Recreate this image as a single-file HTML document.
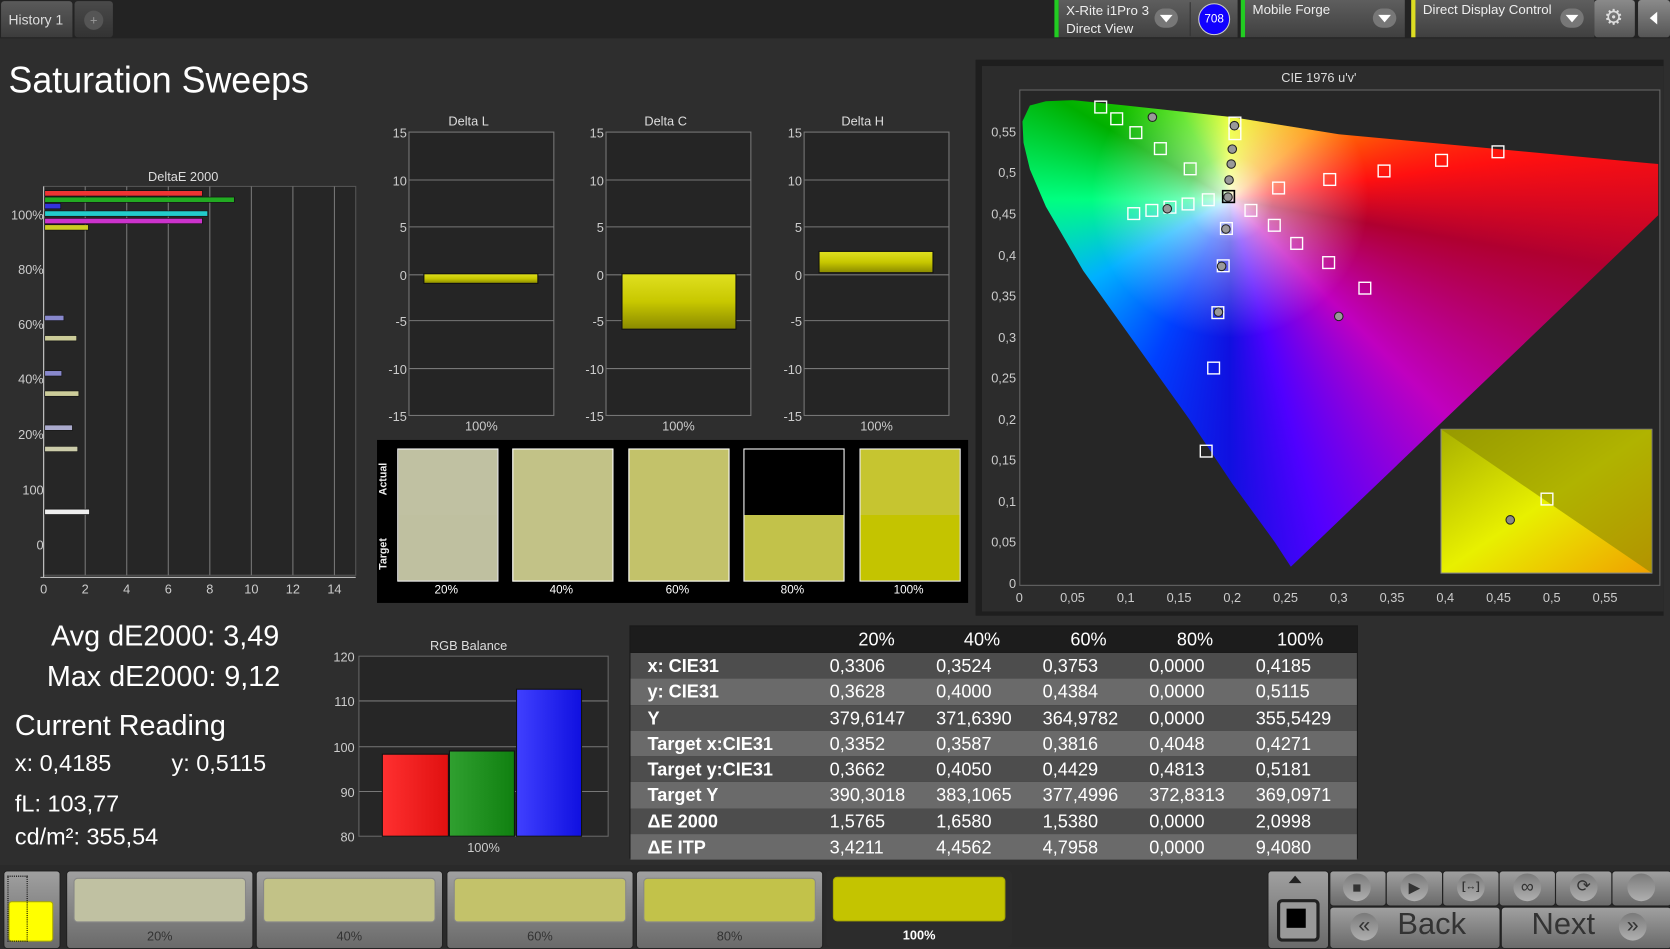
<!DOCTYPE html>
<html><head><meta charset="utf-8"><style>
html,body{margin:0;padding:0;background:#2d2d2d;overflow:hidden;width:1670px;height:947px}
#w{position:absolute;left:0;top:0;width:1568px;height:889px;transform:scale(1.06505,1.06524);transform-origin:0 0;background:#2e2e2e;font-family:"Liberation Sans",sans-serif;color:#fff}
.a{position:absolute}
.t{position:absolute;white-space:nowrap}
.btn{position:absolute;background:linear-gradient(#a0a0a0,#6a6a6a);border-radius:4px;border:1px solid #222}
.sw{position:absolute;border-radius:4px;border:1px solid #888}
.lbl{position:absolute;color:#333;font-size:12px;width:100%;text-align:center}
.ci{position:absolute;width:26px;height:26px;border-radius:13px;background:linear-gradient(#7a7a7a,#b0b0b0);color:#333;text-align:center;line-height:26px}
</style></head><body><div id="w">
<!-- top bar -->
<div class="a" style="left:0;top:0;width:1568px;height:36px;background:#232323"></div>
<div class="a" style="left:1px;top:1px;width:67px;height:34px;background:linear-gradient(#5a5a5a,#3c3c3c);border-radius:3px 3px 0 0"></div>
<div class="t" style="left:8px;top:11px;font-size:13px;color:#ddd">History 1</div>
<div class="a" style="left:70px;top:1px;width:36px;height:34px;background:linear-gradient(#4a4a4a,#333);border-radius:3px"></div>
<div class="a" style="left:79px;top:10px;width:18px;height:18px;border-radius:9px;background:#555;color:#999;font-size:12px;text-align:center;line-height:18px">+</div>
<div class="a" style="left:990px;top:0;width:168px;height:35px;background:linear-gradient(#5e5e5e,#404040);border-left:4px solid #2c2"></div>
<div class="t" style="left:1001px;top:2px;font-size:12.5px;color:#eee;line-height:17px">X-Rite i1Pro 3<br>Direct View</div>
<div class="a" style="left:1084px;top:8px;width:22px;height:18px;border-radius:11px;background:#777"></div>
<div class="a" style="left:1089px;top:14px;border:6px solid transparent;border-top:7px solid #fff;border-bottom:0"></div>
<div class="a" style="left:1117px;top:2px;width:1px;height:32px;background:#333"></div>
<div class="a" style="left:1125px;top:3px;width:28px;height:28px;border-radius:15px;background:#10f;border:1px solid #ccc;font-size:11px;text-align:center;line-height:28px">708</div>
<div class="a" style="left:1165px;top:0;width:150px;height:35px;background:linear-gradient(#5e5e5e,#404040);border-left:4px solid #2c2"></div>
<div class="t" style="left:1176px;top:2px;font-size:12.5px;color:#eee">Mobile Forge</div>
<div class="a" style="left:1289px;top:8px;width:22px;height:18px;border-radius:11px;background:#777"></div>
<div class="a" style="left:1294px;top:14px;border:6px solid transparent;border-top:7px solid #fff;border-bottom:0"></div>
<div class="a" style="left:1325px;top:0;width:168px;height:35px;background:linear-gradient(#5e5e5e,#404040);border-left:4px solid #dd2"></div>
<div class="t" style="left:1336px;top:2px;font-size:12.5px;color:#eee">Direct Display Control</div>
<div class="a" style="left:1465px;top:8px;width:22px;height:18px;border-radius:11px;background:#777"></div>
<div class="a" style="left:1470px;top:14px;border:6px solid transparent;border-top:7px solid #fff;border-bottom:0"></div>
<div class="a" style="left:1497px;top:0;width:38px;height:35px;background:linear-gradient(#8a8a8a,#555);border-radius:3px"></div>
<div class="t" style="left:1506px;top:4px;font-size:20px;color:#ddd">⚙</div>
<div class="a" style="left:1538px;top:0;width:30px;height:35px;background:linear-gradient(#8a8a8a,#555);border-radius:3px"></div>
<div class="a" style="left:1549px;top:11px;border:6px solid transparent;border-right:7px solid #fff;border-left:0"></div>

<div class="t" style="left:8px;top:56px;font-size:35px;color:#fff;transform:scaleX(.96);transform-origin:0 0">Saturation Sweeps</div>

<!-- DeltaE chart -->
<svg class="a" style="left:0;top:150px" width="345" height="415" font-family="Liberation Sans" font-size="12">
<text x="172" y="20" fill="#ddd" text-anchor="middle">DeltaE 2000</text>
<rect x="41" y="25" width="293" height="365" fill="#262626" stroke="#555"/>
<g stroke="#777" stroke-width="1">
<line x1="80" y1="25" x2="80" y2="390"/><line x1="119" y1="25" x2="119" y2="390"/><line x1="158" y1="25" x2="158" y2="390"/><line x1="197" y1="25" x2="197" y2="390"/><line x1="236" y1="25" x2="236" y2="390"/><line x1="275" y1="25" x2="275" y2="390"/><line x1="314" y1="25" x2="314" y2="390"/>
</g>
<line x1="41" y1="25" x2="41" y2="392" stroke="#ccc"/>
<line x1="38" y1="392" x2="334" y2="392" stroke="#ccc"/>
<g stroke="#111" stroke-width=".6">
<rect x="42" y="29" width="148" height="5" fill="#e33"/>
<rect x="42" y="35" width="178" height="5" fill="#2a2"/>
<rect x="42" y="41" width="15" height="5" fill="#33d"/>
<rect x="42" y="48" width="153" height="5" fill="#2cc"/>
<rect x="42" y="55" width="148" height="5" fill="#c3c"/>
<rect x="42" y="61" width="41" height="5" fill="#cc2"/>
<rect x="42" y="146" width="18" height="5" fill="#88c"/>
<rect x="42" y="165" width="30" height="5" fill="#cc9"/>
<rect x="42" y="198" width="16" height="5" fill="#88c"/>
<rect x="42" y="217" width="32" height="5" fill="#cc9"/>
<rect x="42" y="249" width="26" height="5" fill="#aac"/>
<rect x="42" y="269" width="31" height="5" fill="#cca"/>
<rect x="42" y="328" width="42" height="5" fill="#eee"/>
</g>
<g fill="#ccc" text-anchor="end">
<text x="41" y="56">100%</text><text x="41" y="107">80%</text><text x="41" y="159">60%</text><text x="41" y="210">40%</text><text x="41" y="262">20%</text><text x="41" y="314">100</text><text x="41" y="366">0</text>
</g>
<g fill="#ccc" text-anchor="middle">
<text x="41" y="407">0</text><text x="80" y="407">2</text><text x="119" y="407">4</text><text x="158" y="407">6</text><text x="197" y="407">8</text><text x="236" y="407">10</text><text x="275" y="407">12</text><text x="314" y="407">14</text>
</g>
</svg>

<!-- Delta L/C/H -->
<svg class="a" style="left:340px;top:100px" width="570" height="310" font-family="Liberation Sans" font-size="12">
<defs><linearGradient id="yb" x1="0" y1="0" x2="0" y2="1"><stop offset="0" stop-color="#e0e020"/><stop offset=".5" stop-color="#c8c800"/><stop offset="1" stop-color="#8a8a00"/></linearGradient></defs>
<g id="ch">
<rect x="44" y="24" width="136" height="266" fill="#252525" stroke="#777"/>
<g stroke="#777"><line x1="44" y1="69" x2="180" y2="69"/><line x1="44" y1="113" x2="180" y2="113"/><line x1="44" y1="158" x2="180" y2="158"/><line x1="44" y1="201" x2="180" y2="201"/><line x1="44" y1="246" x2="180" y2="246"/></g>
<g fill="#ccc" text-anchor="end"><text x="42" y="29">15</text><text x="42" y="74">10</text><text x="42" y="118">5</text><text x="42" y="163">0</text><text x="42" y="206">-5</text><text x="42" y="251">-10</text><text x="42" y="295">-15</text></g>
<text x="112" y="304" fill="#ccc" text-anchor="middle">100%</text>
</g>
<use href="#ch" x="185"/><use href="#ch" x="371"/>
<text x="100" y="18" fill="#ddd" text-anchor="middle">Delta L</text>
<text x="285" y="18" fill="#ddd" text-anchor="middle">Delta C</text>
<text x="470" y="18" fill="#ddd" text-anchor="middle">Delta H</text>
<rect x="58" y="157" width="107" height="9" fill="url(#yb)" stroke="#111"/>
<rect x="244" y="157" width="107" height="52" fill="url(#yb)" stroke="#111"/>
<rect x="429" y="136" width="107" height="20" fill="url(#yb)" stroke="#111"/>
</svg>

<!-- swatches -->
<div class="a" style="left:354px;top:413px;width:555px;height:153px;background:#000"></div>
<div class="t" style="left:355px;font-size:10px;color:#eee;transform:rotate(-90deg);transform-origin:0 0;top:465px;font-weight:bold">Actual</div>
<div class="t" style="left:355px;top:535px;font-size:10px;color:#eee;transform:rotate(-90deg);transform-origin:0 0;font-weight:bold">Target</div>
<div class="a" style="left:373px;top:421px;width:93px;height:123px;border:1px solid #fff;background:linear-gradient(#c0c1a2 50%,#bfc0a0 50%)"></div>
<div class="a" style="left:481px;top:421px;width:93px;height:123px;border:1px solid #fff;background:#c2c287"></div>
<div class="a" style="left:590px;top:421px;width:93px;height:123px;border:1px solid #fff;background:#c3c26a"></div>
<div class="a" style="left:698px;top:421px;width:93px;height:123px;border:1px solid #fff;background:linear-gradient(#000 50%,#c2c24a 50%)"></div>
<div class="a" style="left:807px;top:421px;width:93px;height:123px;border:1px solid #fff;background:linear-gradient(#c6c530 50%,#c4c400 50%)"></div>
<div class="t" style="left:408px;top:548px;font-size:11px;color:#fff">20%</div>
<div class="t" style="left:516px;top:548px;font-size:11px;color:#fff">40%</div>
<div class="t" style="left:625px;top:548px;font-size:11px;color:#fff">60%</div>
<div class="t" style="left:733px;top:548px;font-size:11px;color:#fff">80%</div>
<div class="t" style="left:839px;top:548px;font-size:11px;color:#fff">100%</div>

<!-- CIE -->
<div class="a" style="left:916px;top:56px;width:646px;height:522px;background:#1e1e1e"></div>
<div class="a" style="left:922px;top:62px;width:640px;height:512px;background:#2c2c2c"></div>
<div class="t" style="left:1203px;top:66px;font-size:12px;color:#ddd">CIE 1976 u'v'</div>
<div class="a" style="left:957px;top:84px;width:600px;height:464px;background:#262626;border:1px solid #666"></div>
<div class="a" style="left:957px;top:84px;width:601px;height:464px;clip-path:polygon(3px 30px,10px 15px,25px 11px,50px 10px,100px 15px,200px 26px,300px 42px,450px 56px,600px 70px,600px 118px,255px 448px,240px 425px,200px 370px,160px 310px,110px 240px,60px 170px,25px 110px,10px 75px,4px 50px);background:radial-gradient(circle at 198px 103px,rgba(255,255,255,.9) 0,rgba(255,255,255,.45) 40px,rgba(255,255,255,0) 130px),conic-gradient(from 0deg at 198px 103px,#e8ff00 0deg,#ff9000 50deg,#ff1010 82deg,#b00030 100deg,#c000c0 135deg,#5000ff 165deg,#1010e0 180deg,#0040ff 205deg,#00b0ff 240deg,#00ff80 270deg,#00b000 300deg,#40e000 330deg,#e8ff00 360deg)"></div>
<svg class="a" style="left:916px;top:56px" width="652" height="530" font-family="Liberation Sans" font-size="12">
<g fill="#ccc" text-anchor="end">
<text x="38" y="72">0,55</text><text x="38" y="110">0,5</text><text x="38" y="149">0,45</text><text x="38" y="188">0,4</text><text x="38" y="226">0,35</text><text x="38" y="265">0,3</text><text x="38" y="303">0,25</text><text x="38" y="342">0,2</text><text x="38" y="380">0,15</text><text x="38" y="419">0,1</text><text x="38" y="457">0,05</text><text x="38" y="496">0</text>
</g>
<g fill="#ccc" text-anchor="middle">
<text x="41" y="509">0</text><text x="91" y="509">0,05</text><text x="141" y="509">0,1</text><text x="191" y="509">0,15</text><text x="241" y="509">0,2</text><text x="291" y="509">0,25</text><text x="341" y="509">0,3</text><text x="391" y="509">0,35</text><text x="441" y="509">0,4</text><text x="491" y="509">0,45</text><text x="541" y="509">0,5</text><text x="591" y="509">0,55</text>
</g>
<g fill="none" stroke="#fff" stroke-width="1.3">
<rect x="112" y="39" width="11" height="11"/><rect x="127" y="50" width="11" height="11"/><rect x="145" y="63" width="11" height="11"/><rect x="168" y="78" width="11" height="11"/><rect x="196" y="97" width="11" height="11"/>
<rect x="238" y="54" width="11" height="11"/><rect x="238" y="64" width="11" height="11"/>
<rect x="485" y="81" width="11" height="11"/><rect x="432" y="89" width="11" height="11"/><rect x="378" y="99" width="11" height="11"/><rect x="327" y="107" width="11" height="11"/><rect x="279" y="115" width="11" height="11"/><rect x="253" y="136" width="11" height="11"/>
<rect x="143" y="139" width="11" height="11"/><rect x="160" y="136" width="11" height="11"/><rect x="177" y="133" width="11" height="11"/><rect x="194" y="130" width="11" height="11"/><rect x="213" y="126" width="11" height="11"/>
<rect x="275" y="150" width="11" height="11"/><rect x="296" y="167" width="11" height="11"/><rect x="326" y="185" width="11" height="11"/><rect x="360" y="209" width="11" height="11"/>
<rect x="230" y="153" width="11" height="11"/><rect x="227" y="188" width="11" height="11"/><rect x="222" y="232" width="11" height="11"/><rect x="218" y="284" width="11" height="11"/><rect x="211" y="362" width="11" height="11"/>
</g>
<rect x="232" y="123" width="11" height="11" fill="none" stroke="#000" stroke-width="1.5"/>
<g fill="#999" stroke="#222" stroke-width="1">
<circle cx="166" cy="54" r="4"/><circle cx="243" cy="62" r="4"/><circle cx="241" cy="84" r="4"/><circle cx="240" cy="98" r="4"/><circle cx="238" cy="113" r="4"/><circle cx="237" cy="129" r="4"/><circle cx="180" cy="140" r="4"/><circle cx="235" cy="159" r="4"/><circle cx="231" cy="194" r="4"/><circle cx="228" cy="237" r="4"/><circle cx="341" cy="241" r="4"/>
</g>
<defs><linearGradient id="ins" x1="0" y1="0" x2="1" y2="1"><stop offset="0" stop-color="#a8b000"/><stop offset=".5" stop-color="#e8f000"/><stop offset="1" stop-color="#f0a000"/></linearGradient></defs>
<rect x="437" y="347" width="198" height="135" fill="url(#ins)" stroke="#888"/>
<polygon points="437,347 635,347 635,482" fill="#8a8a00" opacity=".6"/>
<rect x="531" y="407" width="11" height="11" fill="none" stroke="#fff" stroke-width="1.3"/>
<circle cx="502" cy="432" r="4" fill="#888" stroke="#222"/>
</svg>

<!-- stats -->
<div class="t" style="left:48px;top:582px;font-size:27px">Avg dE2000: 3,49</div>
<div class="t" style="left:44px;top:620px;font-size:27px">Max dE2000: 9,12</div>
<div class="t" style="left:14px;top:666px;font-size:27px">Current Reading</div>
<div class="t" style="left:14px;top:704px;font-size:22px">x: 0,4185</div>
<div class="t" style="left:161px;top:704px;font-size:22px">y: 0,5115</div>
<div class="t" style="left:14px;top:742px;font-size:22px">fL: 103,77</div>
<div class="t" style="left:14px;top:773px;font-size:22px">cd/m²: 355,54</div>

<!-- RGB balance -->
<svg class="a" style="left:300px;top:595px" width="280" height="215" font-family="Liberation Sans" font-size="12">
<text x="140" y="15" fill="#ddd" text-anchor="middle">RGB Balance</text>
<rect x="37" y="21" width="234" height="169" fill="#262626" stroke="#666"/>
<g stroke="#777"><line x1="37" y1="63" x2="271" y2="63"/><line x1="37" y1="106" x2="271" y2="106"/><line x1="37" y1="148" x2="271" y2="148"/></g>
<g fill="#ccc" text-anchor="end"><text x="33" y="26">120</text><text x="33" y="68">110</text><text x="33" y="111">100</text><text x="33" y="153">90</text><text x="33" y="195">80</text></g>
<defs>
<linearGradient id="r" x1="0" y1="0" x2="1" y2="0"><stop offset="0" stop-color="#ff3030"/><stop offset="1" stop-color="#e01010"/></linearGradient>
<linearGradient id="g" x1="0" y1="0" x2="1" y2="0"><stop offset="0" stop-color="#30a030"/><stop offset="1" stop-color="#108010"/></linearGradient>
<linearGradient id="b" x1="0" y1="0" x2="1" y2="0"><stop offset="0" stop-color="#4040ff"/><stop offset="1" stop-color="#1010e0"/></linearGradient>
</defs>
<rect x="59" y="113" width="62" height="77" fill="url(#r)" stroke="#111"/>
<rect x="122" y="110" width="61" height="80" fill="url(#g)" stroke="#111"/>
<rect x="185" y="52" width="61" height="138" fill="url(#b)" stroke="#111"/>
<text x="154" y="205" fill="#ccc" text-anchor="middle">100%</text>
</svg>

<!-- table -->
<div class="a" style="left:591px;top:587px;width:684px;height:219px;background:#1a1a1a"></div>
<div class="a" style="left:592px;top:588px;width:682px;height:24px;background:#1c1c1c;font-size:17px">
<span class="t" style="left:214px;top:3px">20%</span><span class="t" style="left:313px;top:3px">40%</span><span class="t" style="left:413px;top:3px">60%</span><span class="t" style="left:513px;top:3px">80%</span><span class="t" style="left:607px;top:3px">100%</span>
</div>
<div class="a" style="left:592px;top:613px;width:682px;font-size:17px;color:#fff">
<div style="height:24.3px;background:#4d4d4d;position:relative"><b class="t" style="left:16px;top:3px">x: CIE31</b><span class="t" style="left:187px;top:3px">0,3306</span><span class="t" style="left:287px;top:3px">0,3524</span><span class="t" style="left:387px;top:3px">0,3753</span><span class="t" style="left:487px;top:3px">0,0000</span><span class="t" style="left:587px;top:3px">0,4185</span></div>
<div style="height:24.3px;background:#6a6a6a;position:relative"><b class="t" style="left:16px;top:3px">y: CIE31</b><span class="t" style="left:187px;top:3px">0,3628</span><span class="t" style="left:287px;top:3px">0,4000</span><span class="t" style="left:387px;top:3px">0,4384</span><span class="t" style="left:487px;top:3px">0,0000</span><span class="t" style="left:587px;top:3px">0,5115</span></div>
<div style="height:24.3px;background:#4d4d4d;position:relative"><b class="t" style="left:16px;top:3px">Y</b><span class="t" style="left:187px;top:3px">379,6147</span><span class="t" style="left:287px;top:3px">371,6390</span><span class="t" style="left:387px;top:3px">364,9782</span><span class="t" style="left:487px;top:3px">0,0000</span><span class="t" style="left:587px;top:3px">355,5429</span></div>
<div style="height:24.3px;background:#6a6a6a;position:relative"><b class="t" style="left:16px;top:3px">Target x:CIE31</b><span class="t" style="left:187px;top:3px">0,3352</span><span class="t" style="left:287px;top:3px">0,3587</span><span class="t" style="left:387px;top:3px">0,3816</span><span class="t" style="left:487px;top:3px">0,4048</span><span class="t" style="left:587px;top:3px">0,4271</span></div>
<div style="height:24.3px;background:#4d4d4d;position:relative"><b class="t" style="left:16px;top:3px">Target y:CIE31</b><span class="t" style="left:187px;top:3px">0,3662</span><span class="t" style="left:287px;top:3px">0,4050</span><span class="t" style="left:387px;top:3px">0,4429</span><span class="t" style="left:487px;top:3px">0,4813</span><span class="t" style="left:587px;top:3px">0,5181</span></div>
<div style="height:24.3px;background:#6a6a6a;position:relative"><b class="t" style="left:16px;top:3px">Target Y</b><span class="t" style="left:187px;top:3px">390,3018</span><span class="t" style="left:287px;top:3px">383,1065</span><span class="t" style="left:387px;top:3px">377,4996</span><span class="t" style="left:487px;top:3px">372,8313</span><span class="t" style="left:587px;top:3px">369,0971</span></div>
<div style="height:24.3px;background:#4d4d4d;position:relative"><b class="t" style="left:16px;top:3px">ΔE 2000</b><span class="t" style="left:187px;top:3px">1,5765</span><span class="t" style="left:287px;top:3px">1,6580</span><span class="t" style="left:387px;top:3px">1,5380</span><span class="t" style="left:487px;top:3px">0,0000</span><span class="t" style="left:587px;top:3px">2,0998</span></div>
<div style="height:24.3px;background:#6a6a6a;position:relative"><b class="t" style="left:16px;top:3px">ΔE ITP</b><span class="t" style="left:187px;top:3px">3,4211</span><span class="t" style="left:287px;top:3px">4,4562</span><span class="t" style="left:387px;top:3px">4,7958</span><span class="t" style="left:487px;top:3px">0,0000</span><span class="t" style="left:587px;top:3px">9,4080</span></div>
</div>

<!-- bottom bar -->
<div class="a" style="left:0;top:812px;width:1568px;height:77px;background:#2a2a2a"></div>
<div class="btn" style="left:3px;top:817px;width:52px;height:72px"></div>
<div class="a" style="left:8px;top:846px;width:40px;height:36px;background:#ff0;border-radius:3px;border:1px solid #aa0"></div>
<div class="a" style="left:7px;top:822px;width:17px;height:60px;border:1px dotted #000"></div>
<div class="btn" style="left:62px;top:817px;width:174px;height:72px"><div class="sw" style="left:6px;top:6px;width:160px;height:40px;background:#c0c1a2"></div><div class="lbl" style="top:54px">20%</div></div>
<div class="btn" style="left:240px;top:817px;width:174px;height:72px"><div class="sw" style="left:6px;top:6px;width:160px;height:40px;background:#c2c287"></div><div class="lbl" style="top:54px">40%</div></div>
<div class="btn" style="left:419px;top:817px;width:174px;height:72px"><div class="sw" style="left:6px;top:6px;width:160px;height:40px;background:#c3c26a"></div><div class="lbl" style="top:54px">60%</div></div>
<div class="btn" style="left:597px;top:817px;width:174px;height:72px"><div class="sw" style="left:6px;top:6px;width:160px;height:40px;background:#c2c24a"></div><div class="lbl" style="top:54px">80%</div></div>
<div class="a" style="left:776px;top:817px;width:174px;height:72px;background:#2c2c2c;border-radius:4px"><div class="sw" style="left:6px;top:6px;width:160px;height:40px;background:#c4c400;border-color:#aa0"></div><div class="lbl" style="top:54px;color:#fff;font-weight:bold">100%</div></div>

<div class="btn" style="left:1190px;top:817px;width:56px;height:72px"></div>
<div class="a" style="left:1210px;top:822px;border:6px solid transparent;border-bottom:7px solid #222;border-top:0"></div>
<div class="a" style="left:1199px;top:844px;width:34px;height:34px;border:3px solid #222;border-radius:5px;background:#999"></div>
<div class="a" style="left:1208px;top:853px;width:18px;height:18px;background:#000"></div>
<div class="btn" style="left:1248px;top:817px;width:52px;height:32px"></div>
<div class="btn" style="left:1301px;top:817px;width:52px;height:32px"></div>
<div class="btn" style="left:1354px;top:817px;width:52px;height:32px"></div>
<div class="btn" style="left:1407px;top:817px;width:52px;height:32px"></div>
<div class="btn" style="left:1460px;top:817px;width:52px;height:32px"></div>
<div class="btn" style="left:1513px;top:817px;width:55px;height:32px"></div>
<div class="btn" style="left:1248px;top:851px;width:159px;height:38px"></div>
<div class="btn" style="left:1409px;top:851px;width:159px;height:38px"></div>
<div class="ci" style="left:1261px;top:820px;font-size:14px">■</div>
<div class="ci" style="left:1315px;top:820px;font-size:14px">▶</div>
<div class="ci" style="left:1368px;top:820px;font-size:10px;font-weight:bold">[↔]</div>
<div class="ci" style="left:1421px;top:820px;font-size:17px">∞</div>
<div class="ci" style="left:1474px;top:820px;font-size:16px">⟳</div>
<div class="ci" style="left:1528px;top:820px"></div>
<div class="ci" style="left:1268px;top:857px;font-size:20px;line-height:24px">«</div>
<div class="ci" style="left:1520px;top:857px;font-size:20px;line-height:24px">»</div>
<div class="t" style="left:1312px;top:852px;font-size:29px;color:#333">Back</div>
<div class="t" style="left:1438px;top:852px;font-size:29px;color:#333">Next</div>
</div></body></html>
